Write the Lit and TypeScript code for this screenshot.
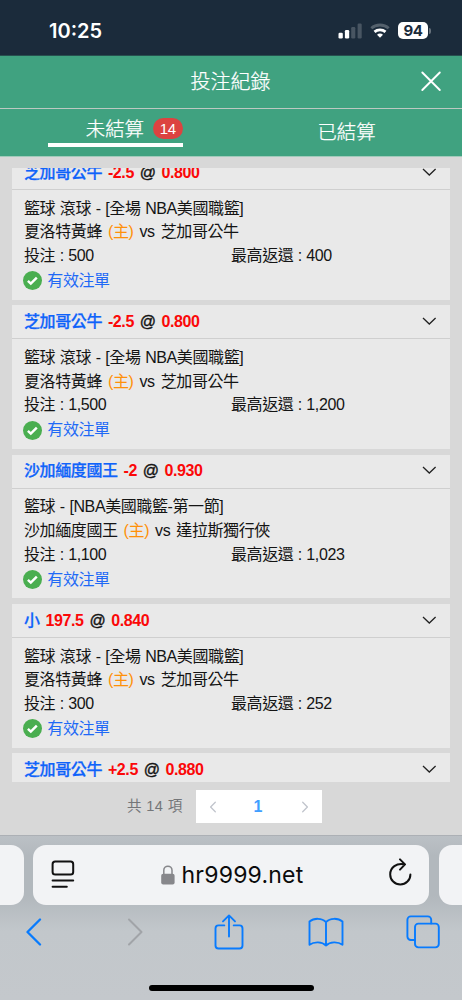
import { LitElement, html, css, svg, nothing } from "lit";
import { customElement, property } from "lit/decorators.js";

interface Bet {
  pick: string;
  line: string;
  odds: string;
  league?: string;
  home?: string;
  away?: string;
  stake?: string;
  payout?: string;
}

const bulls = {
  pick: "芝加哥公牛",
  line: "-2.5",
  odds: "0.800",
  league: "籃球 滾球 - [全場 NBA美國職籃]",
  home: "夏洛特黃蜂",
  away: "芝加哥公牛",
};

const bets: Bet[] = [
  { ...bulls, stake: "500", payout: "400" },
  { ...bulls, stake: "1,500", payout: "1,200" },
  {
    pick: "沙加緬度國王",
    line: "-2",
    odds: "0.930",
    league: "籃球 - [NBA美國職籃-第一節]",
    home: "沙加緬度國王",
    away: "達拉斯獨行俠",
    stake: "1,100",
    payout: "1,023",
  },
  { ...bulls, pick: "小", line: "197.5", odds: "0.840", stake: "300", payout: "252" },
  { pick: "芝加哥公牛", line: "+2.5", odds: "0.880" },
];

@customElement("bet-card")
export class BetCard extends LitElement {
  @property({ attribute: false }) bet!: Bet;

  static styles = css`
    :host {
      display: block;
      flex: none;
      height: 143.5px;
      background: #e9e9e9;
      color: #141414;
      font-size: 16px;
      letter-spacing: -0.4px;
      white-space: nowrap;
    }
    .head {
      box-sizing: border-box;
      height: 34px;
      padding: 0 13px 0 12px;
      border-bottom: 1px solid #cfcfcf;
      display: flex;
      align-items: center;
      gap: 5.9px;
      font-weight: 700;
      line-height: 34px;
    }
    .pick {
      color: #0f63fa;
      font-weight: 500;
      -webkit-text-stroke: 0.25px #0f63fa;
    }
    .red {
      color: #fb0808;
    }
    .at {
      font-weight: 400;
      -webkit-text-stroke: 0.4px #141414;
    }
    .chev {
      margin-left: auto;
      margin-top: -2px;
    }
    .body {
      padding: 6.6px 12px 0;
      line-height: 23.7px;
    }
    .league {
      word-spacing: 0.6px;
    }
    .teams {
      display: flex;
      gap: 6px;
    }
    .home {
      color: #ff9008;
    }
    .money {
      display: grid;
      grid-template-columns: 1fr 1fr;
      word-spacing: 0.4px;
    }
    .valid {
      display: flex;
      align-items: center;
      gap: 5px;
      height: 26px;
      margin-left: -0.7px;
      color: #1f69f6;
    }
  `;

  render() {
    const b = this.bet;
    return html`
      <div class="head">
        <span class="pick">${b.pick}</span>
        <span class="red">${b.line}</span>
        <span class="at">@</span>
        <span class="red">${b.odds}</span>
        <svg class="chev" width="16" height="10" viewBox="0 0 16 10">
          <path d="M2 2 8.3 8 14.6 2" fill="none" stroke="#222" stroke-width="1.3" />
        </svg>
      </div>
      ${b.league
        ? html`<div class="body">
            <div class="league">${b.league}</div>
            <div class="teams">
              <span>${b.home}</span><span class="home">(主)</span><span>vs</span><span>${b.away}</span>
            </div>
            <div class="money">
              <span>投注 : ${b.stake}</span><span>最高返還 : ${b.payout}</span>
            </div>
            <div class="valid">
              <svg width="19" height="19" viewBox="0 0 19 19">
                <circle cx="9.5" cy="9.5" r="9.5" fill="#4aae50" />
                <path d="M4.9 9.9 7.8 12.6 13.8 6.7" fill="none" stroke="#fff" stroke-width="2.5" />
              </svg>
              <span>有效注單</span>
            </div>
          </div>`
        : nothing}
    `;
  }
}

const stroke = (w: number, h: number, paths: unknown, color = "#087bfe", width = 1.9) => html`
  <svg width=${w} height=${h} viewBox="0 0 ${w} ${h}" fill="none" stroke=${color}
    stroke-width=${width} stroke-linecap="round" stroke-linejoin="round">${paths}</svg>
`;

@customElement("app-root")
export class AppRoot extends LitElement {
  static styles = css`
    :host {
      display: flex;
      flex-direction: column;
      width: 462px;
      height: 1000px;
      overflow: hidden;
      background: #d8d8d8;
      font-family: "Liberation Sans", "Noto Sans CJK TC", sans-serif;
    }
    svg {
      display: block;
      flex: none;
    }
    .status {
      box-sizing: border-box;
      height: 56px;
      padding: 6px 33px 0 49px;
      display: flex;
      align-items: center;
      background: #1b2b3b;
      color: #fff;
      font: 600 20px Inter, sans-serif;
      border-bottom: 1px solid #27504f;
    }
    .time {
      margin-right: auto;
    }
    .wifi {
      margin: 0 8px;
    }
    .battery {
      width: 30px;
      height: 17px;
      border-radius: 5px;
      background: #fff;
      color: #1b2b3b;
      font-size: 15px;
      font-weight: 700;
      letter-spacing: -0.5px;
      line-height: 17px;
      text-align: center;
    }
    .cap {
      width: 2px;
      height: 6px;
      margin-left: 1px;
      margin-right: -2px;
      border-radius: 0 2px 2px 0;
      background: #67727c;
    }
    .title {
      box-sizing: border-box;
      height: 53px;
      padding: 0 20px 2px;
      display: grid;
      grid-template-columns: 22px 1fr 22px;
      align-items: center;
      background: #40a280;
      color: #fff;
      font-size: 20px;
      font-weight: 300;
      line-height: 28px;
      text-align: center;
      -webkit-text-stroke: 0.25px #fff;
      border-bottom: 1px solid #bcc9c2;
    }
    .name {
      margin: 2px 0 0 -1px;
    }
    .tabs {
      box-sizing: border-box;
      height: 48px;
      display: grid;
      grid-template-columns: 1fr 1fr;
      justify-items: center;
      align-items: start;
      background: #40a280;
      color: #fff;
      font-size: 19.4px;
      font-weight: 300;
      border-bottom: 1px solid #a1cbbb;
      -webkit-text-stroke: 0.25px #fff;
    }
    .tab {
      box-sizing: border-box;
      width: 135px;
      height: 38px;
      display: flex;
      align-items: center;
      justify-content: flex-end;
      gap: 8.5px;
      padding-top: 5px;
      border-bottom: 4px solid #fff;
    }
    .pending {
      margin-top: -2px;
    }
    .plain {
      padding-top: 9px;
      line-height: 28px;
    }
    .count {
      width: 30.5px;
      height: 21.5px;
      border-radius: 11px;
      background: #dc4340;
      font-size: 15px;
      letter-spacing: -0.3px;
      line-height: 21.5px;
      text-align: center;
      font-weight: 400;
      -webkit-text-stroke: 0;
    }
    .list {
      margin: 11px 12px 0;
      height: 614px;
      overflow: hidden;
      display: flex;
      flex-direction: column;
      gap: 5.85px;
    }
    .first {
      margin-top: -11.9px;
    }
    .pager {
      height: 53px;
      padding: 8px 140px 0 127px;
      box-sizing: border-box;
      display: flex;
      align-items: flex-start;
      justify-content: space-between;
      color: #747679;
      font-size: 14.6px;
      line-height: 33px;
      white-space: nowrap;
    }
    .total {
      letter-spacing: 0.35px;
    }
    .pages {
      width: 126px;
      height: 33px;
      background: #fff;
      display: grid;
      grid-template-columns: 33px 1fr 35px;
      align-items: center;
      justify-items: center;
    }
    .page {
      color: #409eff;
      font-weight: 700;
      font-size: 16px;
    }
    .browser {
      height: 165px;
      box-sizing: border-box;
      border-top: 1px solid #acb0b5;
      background: linear-gradient(#bbc0c5, #b2b8bd 20px, #b2b8bd 60px, #c2c7cb 95px, #c4c8cc);
      display: flex;
      flex-direction: column;
    }
    .addresses {
      display: flex;
      gap: 9.5px;
      margin: 8.5px -20px 0;
      height: 60px;
    }
    .side {
      width: 43.5px;
      flex: none;
      border-radius: 13px;
      background: #f2f3f5;
    }
    .address {
      flex: 1;
      border-radius: 13px;
      background: #f2f3f5;
      padding: 0 17px 0 18px;
      display: flex;
      align-items: center;
      justify-content: space-between;
    }
    .lens {
      margin-top: -2px;
    }
    .reload {
      margin-top: -5px;
    }
    .url {
      display: flex;
      align-items: center;
      gap: 7px;
      padding-left: 1px;
      margin-top: 1px;
      color: #0b0b0c;
      font: 400 23px Inter, sans-serif;
      letter-spacing: 0.2px;
    }
    .tools {
      display: grid;
      grid-template-columns: repeat(5, 97.2px);
      align-items: center;
      justify-items: center;
      height: 40px;
      margin: 7.5px 0 0 -14.2px;
    }
    .homebar {
      width: 165px;
      height: 6px;
      margin: 33px auto 0;
      border-radius: 3px;
      background: #000;
    }
  `;

  render() {
    return html`
      <div class="status">
        <span class="time">10:25</span>
        <svg width="24" height="16" viewBox="0 0 24 16" fill="#fff">
          <rect x="0.5" y="9.7" width="4.3" height="5.8" rx="1.2" />
          <rect x="6.9" y="7" width="4.3" height="8.5" rx="1.2" />
          <rect x="13.2" y="4" width="4.1" height="11.5" rx="1.2" opacity=".2" />
          <rect x="19.6" y="0.6" width="4.1" height="14.9" rx="1.2" opacity=".2" />
        </svg>
        <svg class="wifi" width="20" height="16" viewBox="0 0 20 16">
          <path d="M1.3 5.2C6 .9 14 .9 18.7 5.2" fill="none" stroke="#54616d" stroke-width="2.8" />
          <path d="M4.5 8.9c3.1-2.7 7.9-2.7 11 0" fill="none" stroke="#fff" stroke-width="2.8" />
          <path d="M7 11.7c1.7-1.5 4.3-1.5 6 0l-3 3z" fill="#fff" />
        </svg>
        <span class="battery">94</span><span class="cap"></span>
      </div>

      <div class="title">
        <span></span><span class="name">投注紀錄</span>
        ${stroke(22, 22, svg`<path d="M2.3 2.5 19.8 20M19.8 2.5 2.3 20" />`, "#fff", 1.9)}
      </div>

      <div class="tabs">
        <div class="tab"><span class="pending">未結算</span><span class="count">14</span></div>
        <span class="plain">已結算</span>
      </div>

      <div class="list">
        ${bets.map((b, i) => html`<bet-card class=${i === 0 ? "first" : ""} .bet=${b}></bet-card>`)}
      </div>

      <div class="pager">
        <span class="total">共 14 項</span>
        <div class="pages">
          ${stroke(8, 12, svg`<path d="M6.3 1.3 1.6 6 6.3 10.7" />`, "#c0c4cc", 1.3)}
          <span class="page">1</span>
          ${stroke(8, 12, svg`<path d="M1.7 1.3 6.4 6 1.7 10.7" />`, "#c0c4cc", 1.3)}
        </div>
      </div>

      <div class="browser">
        <div class="addresses">
          <div class="side"></div>
          <div class="address">
            <div class="lens">
              ${stroke(24, 28, svg`<rect x="1.6" y="1.6" width="20.6" height="13" rx="2.6" /><path d="M1.6 20.6H22.2M1.6 26.8H15.8" />`, "#111", 2)}
            </div>
            <div class="url">
              <svg width="14" height="20" viewBox="0 0 14 20">
                <rect x="0.2" y="8.8" width="13.4" height="10.7" rx="2" fill="#87878b" />
                <path d="M2.8 9.5V5.3a4.1 4.1 0 0 1 8.2 0v4.2" fill="none" stroke="#87878b" stroke-width="1.5" />
              </svg>
              <span>hr9999.net</span>
            </div>
            <div class="reload">
              ${stroke(24, 28, svg`<path d="M16.6 6.4C8.5 4.6 2.2 9.6 2.2 16.4A10.1 10.1 0 0 0 22.4 16.4M12 1.4 17 6.4 12 11.6" />`, "#111", 2)}
            </div>
          </div>
          <div class="side"></div>
        </div>
        <div class="tools">
          ${stroke(18, 28, svg`<path d="M15 1.5 2.5 14 15 26.5" />`, "#087bfe", 2.3)}
          ${stroke(24, 28, svg`<path d="M9 1.5 21.5 14 9 26.5" />`, "#a1a4a8", 2)}
          ${stroke(30, 36, svg`<path d="M10.3 11.4H4.5a3 3 0 0 0-3 3V31.5a3 3 0 0 0 3 3H25.5a3 3 0 0 0 3-3V14.4a3 3 0 0 0-3-3H19.7M15 22.5V1.6M9 7.4 15 1.4 21 7.4" />`)}
          ${stroke(36, 30, svg`<path d="M18 28.5V5.2C14 .8 6 .8 1.5 4.6V27.8C6 24.4 14 24.4 18 28.5C22 24.4 30 24.4 34.5 27.8V4.6C30 .8 22 .8 18 5.2" />`)}
          ${stroke(34, 34, svg`<path d="M9 25H4.8a3.4 3.4 0 0 1-3.4-3.4V4.8a3.4 3.4 0 0 1 3.4-3.4H21.8a3.4 3.4 0 0 1 3.4 3.4V8.4" /><rect x="9" y="8.6" width="23.8" height="23.8" rx="3.4" />`)}
        </div>
        <div class="homebar"></div>
      </div>
    `;
  }
}
